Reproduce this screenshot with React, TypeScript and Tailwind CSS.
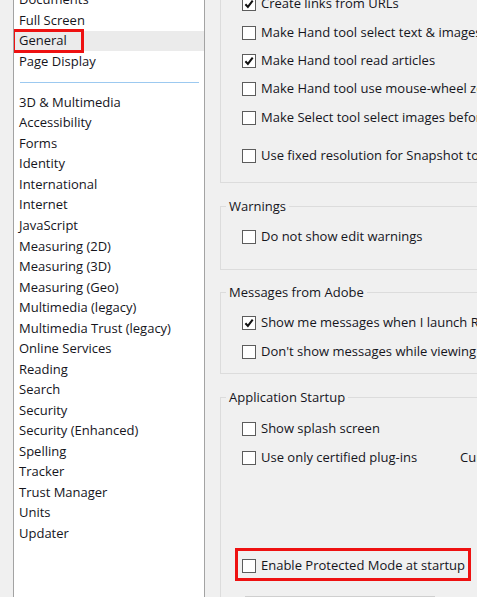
import React from "react";

function Check({ checked }: { checked?: boolean }) {
  return (
    <span className="w-[14px] h-[14px] border border-[#5c5c5c] bg-white flex items-center justify-center shrink-0">
      {checked && (
        <svg width="10" height="10" viewBox="0 0 10 10">
          <path d="M1.4 5.2 L3.9 7.9 L8.7 1.6" stroke="#111" strokeWidth="2" fill="none" />
        </svg>
      )}
    </span>
  );
}

function Row({ label, checked, className = "", children }: { label: string; checked?: boolean; className?: string; children?: React.ReactNode }) {
  return (
    <div className={"flex items-center h-[20px] gap-[5px] whitespace-nowrap " + className}>
      <Check checked={checked} />
      <span>{label}</span>
      {children}
    </div>
  );
}

const items: (string | null)[] = [
  "Documents",
  "Full Screen",
  "General",
  "Page Display",
  null,
  "3D & Multimedia",
  "Accessibility",
  "Forms",
  "Identity",
  "International",
  "Internet",
  "JavaScript",
  "Measuring (2D)",
  "Measuring (3D)",
  "Measuring (Geo)",
  "Multimedia (legacy)",
  "Multimedia Trust (legacy)",
  "Online Services",
  "Reading",
  "Search",
  "Security",
  "Security (Enhanced)",
  "Spelling",
  "Tracker",
  "Trust Manager",
  "Units",
  "Updater",
];

function Group({ title, children, className = "" }: { title: string; children: React.ReactNode; className?: string }) {
  return (
    <fieldset className={"ml-[15px] w-[320px] border border-[#dcdcdc] shrink-0 " + className}>
      <legend className="ml-[5px] px-[3px] leading-[17px]">{title}</legend>
      <div className="pl-[21px]">{children}</div>
    </fieldset>
  );
}

export default function App() {
  return (
    <div className="flex h-[597px] w-[477px] overflow-hidden bg-[#f0f0f0] text-[13px] text-[#15151c] font-['Open_Sans',sans-serif]">
      <div className="w-[13px] shrink-0" />
      <div className="w-[192px] shrink-0 bg-white border-x border-[#a3a3a3] overflow-hidden">
        <div className="mt-[-10.35px] flex flex-col">
          {items.map((it, i) =>
            it === null ? (
              <div key={i} className="h-[20.54px] flex items-center pl-[6px] pr-[5px]">
                <div className="h-[1px] w-full bg-[#9cc9f0]" />
              </div>
            ) : (
              <div
                key={i}
                className={
                  "relative h-[20.54px] flex items-center pl-[5px] whitespace-nowrap " +
                  (it === "General" ? "bg-[#ebebeb]" : "")
                }
              >
                {it}
                {it === "General" && (
                  <div className="absolute left-[-2px] top-[-2px] w-[72px] h-[24px] border-[3px] border-[#ee1111]" />
                )}
              </div>
            )
          )}
        </div>
      </div>
      <div className="flex-1 flex flex-col overflow-hidden">
        <div className="mt-[-10px] ml-[15px] w-[320px] shrink-0 border-x border-b border-[#dcdcdc] pl-[21px] pt-[4px] pb-[16px] flex flex-col">
          <Row label="Create links from URLs" checked />
          <Row label="Make Hand tool select text & images under cursor" className="mt-[9px]" />
          <Row label="Make Hand tool read articles" checked className="mt-[8px]" />
          <Row label="Make Hand tool use mouse-wheel zooming" className="mt-[8px]" />
          <Row label="Make Select tool select images before text" className="mt-[9px]" />
          <Row label="Use fixed resolution for Snapshot tool images" className="mt-[18px]" />
        </div>
        <Group title="Warnings" className="mt-[14.5px]">
          <div className="pt-[12.5px] pb-[22px]">
            <Row label="Do not show edit warnings" />
          </div>
        </Group>
        <Group title="Messages from Adobe" className="mt-[13.5px]">
          <div className="pt-[12.5px] pb-[11px] flex flex-col">
            <Row label="Show me messages when I launch Reader" checked />
            <Row label="Don't show messages while viewing a document" className="mt-[9px]" />
          </div>
        </Group>
        <Group title="Application Startup" className="mt-[14.5px]">
          <div className="pt-[13.5px] pb-[20px] flex flex-col">
            <Row label="Show splash screen" />
            <div className="mt-[9px] flex items-center h-[20px] whitespace-nowrap">
              <div className="w-[218px] flex items-center gap-[5px] shrink-0">
                <Check />
                <span>Use only certified plug-ins</span>
              </div>
              <span>Current mode:</span>
            </div>
            <div className="relative mt-[88px] w-fit">
              <Row label="Enable Protected Mode at startup" />
              <div className="absolute left-[-7px] top-[-8px] w-[236px] h-[33px] border-[3px] border-[#ee1111]" />
            </div>
            <div className="mt-[20px] ml-[3px] w-[190px] h-[24px] border border-[#cfcfcf] bg-[#e6e6e6]" />
          </div>
        </Group>
      </div>
    </div>
  );
}
